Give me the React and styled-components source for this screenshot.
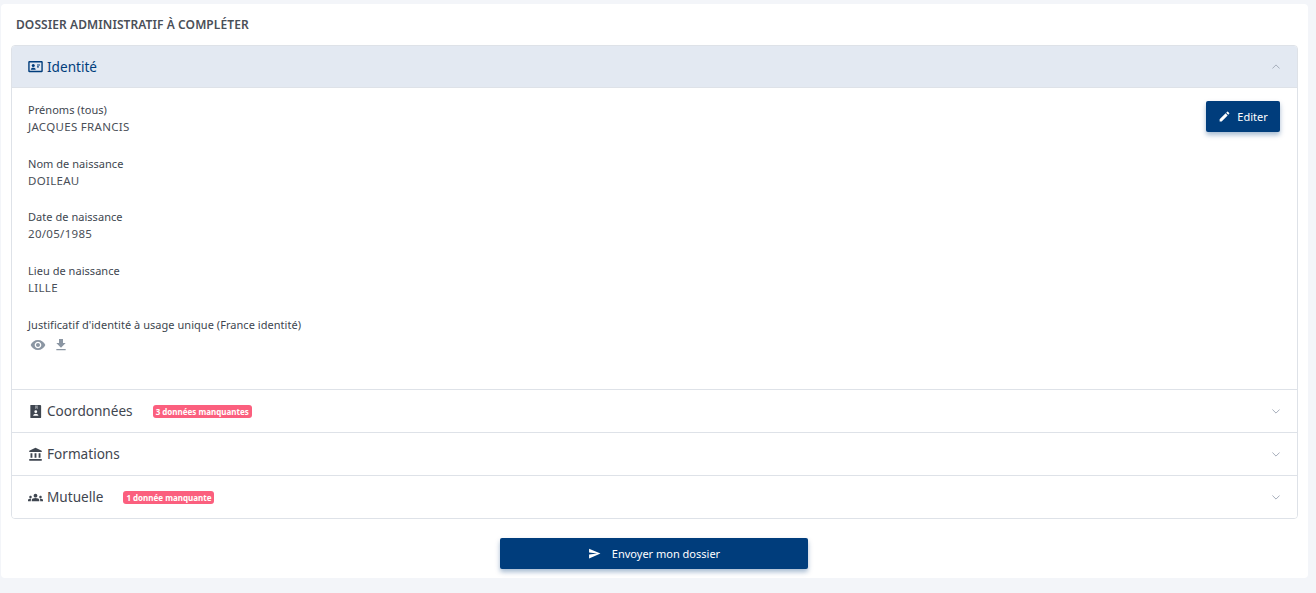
import React from "react";
import styled, { createGlobalStyle } from "styled-components";
import { MdEdit, MdVisibility, MdFileDownload, MdSend, MdAccountBalance, MdGroups } from "react-icons/md";

const Global = createGlobalStyle`
  html, body { margin: 0; padding: 0; background: #f3f5f9; }
  body { font-family: "Noto Sans", "Open Sans", sans-serif; color: #3f4650; }
  * { box-sizing: border-box; }
`;
const Page = styled.div`
  width: 1316px; height: 593px; padding: 4px 8px 15px 1px;
`;
const Card = styled.main`
  height: 574px; background: #fff; border-radius: 4px; padding: 0 10px;
  display: flex; flex-direction: column;
`;
const Title = styled.h1`
  margin: 0; height: 41px; padding: 13px 0 0 5px;
  font-size: 12px; line-height: 15px; font-weight: 600; color: #4a4f58; letter-spacing: 0.08px;
`;
const Accordion = styled.section`
  border: 1px solid #dee2e8; border-radius: 4px; overflow: hidden;
`;
const Row = styled.div`
  height: ${p => (p.$open ? 42 : 43)}px;
  display: flex; align-items: center; padding: 0 17px 0 16px;
  background: ${p => (p.$open ? "#e3e9f2" : "#fff")};
  color: ${p => (p.$open ? "#003d7c" : "#3f4650")};
  border-top: ${p => (p.$first ? "none" : "1px solid #dee2e8")};
  border-bottom: ${p => (p.$open ? "1px solid #dee2e8" : "none")};
`;
const IconSlot = styled.span`
  width: 15px; height: 15px; margin-right: 4px; display: flex; align-items: center; justify-content: center;
  flex: none;
  svg { width: 15px; height: 15px; display: block; flex: none; }
`;
const RowTitle = styled.span`
  font-size: 13.6px; line-height: 20px;
`;
const Badge = styled.span`
  margin-left: 20px; height: 13px; padding: 0 3px; border-radius: 3px;
  background: #fb5f7e; color: #fff; font-size: 8px; line-height: 13px; font-weight: 700;
  white-space: nowrap;
`;
const Chevron = styled.svg`
  margin-left: auto; width: 8px; height: 5px; flex: none;
  fill: none; stroke: #a6aebb; stroke-width: 1;
`;
const Body = styled.div`
  height: 301px; padding: 13px 17px 0 16px; display: flex; justify-content: space-between; align-items: flex-start;
`;
const Fields = styled.div`
  display: flex; flex-direction: column; gap: 20.7px;
`;
const Field = styled.div`
  font-size: 11px; line-height: 17px; height: 33px; color: #4a4f58;
`;
const Label = styled.div`
  color: #40464f; letter-spacing: 0.04px;
`;
const Value = styled.div`
  color: #4a4f58; font-size: 11.5px; letter-spacing: 0.3px;
`;
const FileIcons = styled.div`
  display: flex; align-items: center; gap: 7px; padding: 4px 0 0 2px; color: #8b96a3;
  svg { width: 16px; height: 16px; display: block; }
`;
const Primary = styled.button`
  border: 0; border-radius: 2px; background: #003d7c; color: #fff;
  box-shadow: 0 3px 5px rgba(0, 61, 124, .35);
  font-family: inherit; font-size: 11px; display: flex; align-items: center; justify-content: center;
  padding: 0;
`;
const EditButton = styled(Primary)`
  width: 74px; height: 31px; gap: 6px;
  svg { width: 13px; height: 13px; }
`;
const Footer = styled.div`
  display: flex; justify-content: center; padding: 19px 2px 0 0;
`;
const SendButton = styled(Primary)`
  width: 308px; height: 31px; gap: 11px; padding: 0 0 1px 1px;
  svg { width: 13px; height: 13px; }
`;

const CardIcon = () => (
  <svg viewBox="0 0 16 16" fill="none">
    <rect x="1" y="3" width="14" height="10.4" rx=".5" stroke="currentColor" strokeWidth="1.5" />
    <circle cx="5.6" cy="6.8" r="1.6" fill="currentColor" />
    <path d="M3 11.4c0-1.500 1.300-2.100 2.600-2.100s2.600.6 2.600 2.100z" fill="currentColor" />
    <path d="M9.600 6.400h3.200M9.600 8.400h2" stroke="currentColor" strokeWidth="1.1" />
  </svg>
);
const BookIcon = () => (
  <svg viewBox="0 0 16 16">
    <path d="M2.500 1h10.500a1 1 0 0 1 1 1v12a1 1 0 0 1-1 1H2.500z" fill="currentColor" />
    <path d="M7.500 1.500v4l1.500-1 1.500 1v-4z" fill="#8e939a" />
    <circle cx="8.300" cy="8.200" r="1.500" fill="#fff" />
    <path d="M5.500 12.600c0-1.600 1.400-2.300 2.800-2.300s2.800.7 2.800 2.300z" fill="#fff" />
  </svg>
);
const Up = () => (
  <Chevron viewBox="0 0 8 5"><path d="M.4 4.500 4 .9l3.600 3.600" /></Chevron>
);
const Down = () => (
  <Chevron viewBox="0 0 8 5"><path d="M.4.5 4 4.100 7.600.5" /></Chevron>
);

const fields = [
  ["Prénoms (tous)", "JACQUES FRANCIS"],
  ["Nom de naissance", "DOILEAU"],
  ["Date de naissance", "20/05/1985"],
  ["Lieu de naissance", "LILLE"],
];

export default function App() {
  return (
    <Page>
      <Global />
      <Card>
        <Title>DOSSIER ADMINISTRATIF À COMPLÉTER</Title>
        <Accordion>
          <Row $open $first>
            <IconSlot><CardIcon /></IconSlot>
            <RowTitle>Identité</RowTitle>
            <Up />
          </Row>
          <Body>
            <Fields>
              {fields.map(([l, v]) => (
                <Field key={l}>
                  <Label>{l}</Label>
                  <Value>{v}</Value>
                </Field>
              ))}
              <Field>
                <Label>Justificatif d'identité à usage unique (France identité)</Label>
                <FileIcons><MdVisibility /><MdFileDownload /></FileIcons>
              </Field>
            </Fields>
            <EditButton><MdEdit />Editer</EditButton>
          </Body>
          <Row>
            <IconSlot><BookIcon /></IconSlot>
            <RowTitle>Coordonnées</RowTitle>
            <Badge>3 données manquantes</Badge>
            <Down />
          </Row>
          <Row>
            <IconSlot><MdAccountBalance /></IconSlot>
            <RowTitle>Formations</RowTitle>
            <Down />
          </Row>
          <Row>
            <IconSlot><MdGroups /></IconSlot>
            <RowTitle>Mutuelle</RowTitle>
            <Badge>1 donnée manquante</Badge>
            <Down />
          </Row>
        </Accordion>
        <Footer>
          <SendButton><MdSend />Envoyer mon dossier</SendButton>
        </Footer>
      </Card>
    </Page>
  );
}
